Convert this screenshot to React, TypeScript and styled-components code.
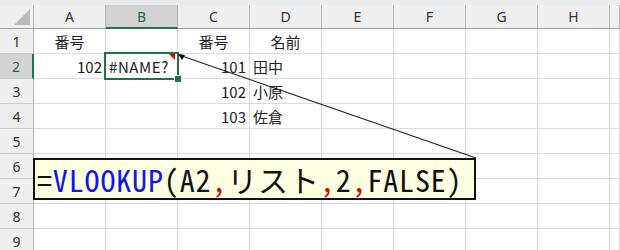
import React from "react";
import styled, { createGlobalStyle } from "styled-components";

const Global = createGlobalStyle`
  html, body { margin: 0; padding: 0; background: #fff; }
  body { width: 620px; height: 250px; overflow: hidden; }
`;

const Page = styled.div`
  position: relative;
  width: 620px;
  height: 250px;
  overflow: hidden;
  font-family: "Noto Sans CJK JP", "Noto Sans", sans-serif;
`;

const TopStrip = styled.div`
  height: 5px;
  background: #e9ecef;
`;

const Sheet = styled.div`
  display: grid;
  grid-template-columns: 34px repeat(8, 72px) 1fr;
  grid-template-rows: 24px repeat(9, 25px);
`;

const Corner = styled.div`
  position: relative;
  background: #efefef;
  border-right: 1px solid #b4b4b4;
  border-bottom: 1px solid #9e9e9e;
`;

const CornerTriangle = styled.div`
  position: absolute;
  right: 3px;
  bottom: 3px;
  width: 0;
  height: 0;
  border-left: 16px solid transparent;
  border-bottom: 16px solid #b9b9b9;
`;

const ColHead = styled.div<{ $sel?: boolean }>`
  display: flex;
  align-items: center;
  justify-content: center;
  box-sizing: border-box;
  background: ${(p) => (p.$sel ? "#d3d3d3" : "#efefef")};
  color: ${(p) => (p.$sel ? "#1d6b40" : "#333")};
  border-right: 1px solid #b4b4b4;
  border-bottom: ${(p) => (p.$sel ? "2px solid #217346" : "1px solid #9e9e9e")};
  font-family: "Noto Sans", "Liberation Sans", sans-serif;
  font-size: 14px;
`;

const RowHead = styled.div<{ $sel?: boolean }>`
  display: flex;
  align-items: center;
  justify-content: center;
  box-sizing: border-box;
  background: ${(p) => (p.$sel ? "#d3d3d3" : "#efefef")};
  color: ${(p) => (p.$sel ? "#1d6b40" : "#333")};
  border-right: ${(p) => (p.$sel ? "2px solid #217346" : "1px solid #b4b4b4")};
  border-bottom: 1px solid #c8c8c8;
  font-family: "Noto Sans", "Liberation Sans", sans-serif;
  font-size: 14px;
`;

const Cell = styled.div<{ $align?: "left" | "right" | "center" }>`
  position: relative;
  display: flex;
  align-items: center;
  box-sizing: border-box;
  padding: 0 3px;
  justify-content: ${(p) =>
    p.$align === "right" ? "flex-end" : p.$align === "center" ? "center" : "flex-start"};
  border-right: 1px solid #dadada;
  border-bottom: 1px solid #dadada;
  font-size: 15px;
  color: #222;
  white-space: nowrap;
`;

const ActiveCell = styled(Cell)`
  letter-spacing: 0.6px;
  &::before {
    content: "";
    position: absolute;
    left: -2px;
    top: -2px;
    right: -2px;
    bottom: -2px;
    border: 2px solid #217346;
    z-index: 2;
  }
  &::after {
    content: "";
    position: absolute;
    right: -4px;
    bottom: -4px;
    width: 6px;
    height: 6px;
    background: #217346;
    outline: 1px solid #fff;
    z-index: 3;
  }
`;

const CommentMark = styled.span`
  position: absolute;
  right: 2px;
  top: 0;
  width: 0;
  height: 0;
  border-left: 6px solid transparent;
  border-top: 6px solid #e00000;
  z-index: 4;
`;

const Callout = styled.div`
  position: absolute;
  left: 33px;
  top: 158px;
  width: 443px;
  height: 42px;
  box-sizing: border-box;
  border: 2px solid #111;
  background: #ffffe1;
  display: flex;
  align-items: center;
  padding-left: 2px;
  z-index: 5;
`;

const Formula = styled.span`
  font-family: "Noto Sans Mono CJK JP", "Noto Sans CJK JP", "DejaVu Sans Mono", monospace;
  font-size: 30px;
  line-height: 38px;
  color: #111;
  white-space: pre;
  letter-spacing: 0.85px;
`;

const Fn = styled.span`
  color: #1515e8;
`;

const Sep = styled.span`
  color: #e00000;
`;

const Leader = styled.svg`
  position: absolute;
  left: 0;
  top: 0;
  z-index: 6;
  pointer-events: none;
`;

type Row = { a?: string; b?: string; c?: string; d?: string; head?: boolean };

const rows: Row[] = [
  { a: "番号", c: "番号", d: "名前", head: true },
  { a: "102", b: "#NAME?", c: "101", d: "田中" },
  { c: "102", d: "小原" },
  { c: "103", d: "佐倉" },
  {},
  {},
  {},
  {},
  {},
];

const cols = ["A", "B", "C", "D", "E", "F", "G", "H", ""];

export default function App() {
  return (
    <Page>
      <Global />
      <TopStrip />
      <Sheet>
        <Corner>
          <CornerTriangle />
        </Corner>
        {cols.map((c) => (
          <ColHead key={c || "x"} $sel={c === "B"}>
            {c}
          </ColHead>
        ))}
        {rows.map((r, i) => (
          <React.Fragment key={i}>
            <RowHead $sel={i === 1}>{i + 1}</RowHead>
            <Cell $align={r.head ? "center" : "right"}>{r.a}</Cell>
            {i === 1 ? (
              <ActiveCell $align="left">
                {r.b}
                <CommentMark />
              </ActiveCell>
            ) : (
              <Cell>{r.b}</Cell>
            )}
            <Cell $align={r.head ? "center" : "right"}>{r.c}</Cell>
            <Cell $align={r.head ? "center" : "left"}>{r.d}</Cell>
            <Cell />
            <Cell />
            <Cell />
            <Cell />
            <Cell />
          </React.Fragment>
        ))}
      </Sheet>
      <Leader width="620" height="250" viewBox="0 0 620 250">
        <line x1="476" y1="158" x2="182" y2="56" stroke="#222" strokeWidth="1.2" />
        <polygon points="178,54 185,55 182,60" fill="#000" />
      </Leader>
      <Callout>
        <Formula>
          =<Fn>VLOOKUP</Fn>(A2<Sep>,</Sep>リスト<Sep>,</Sep>2<Sep>,</Sep>FALSE)
        </Formula>
      </Callout>
    </Page>
  );
}
